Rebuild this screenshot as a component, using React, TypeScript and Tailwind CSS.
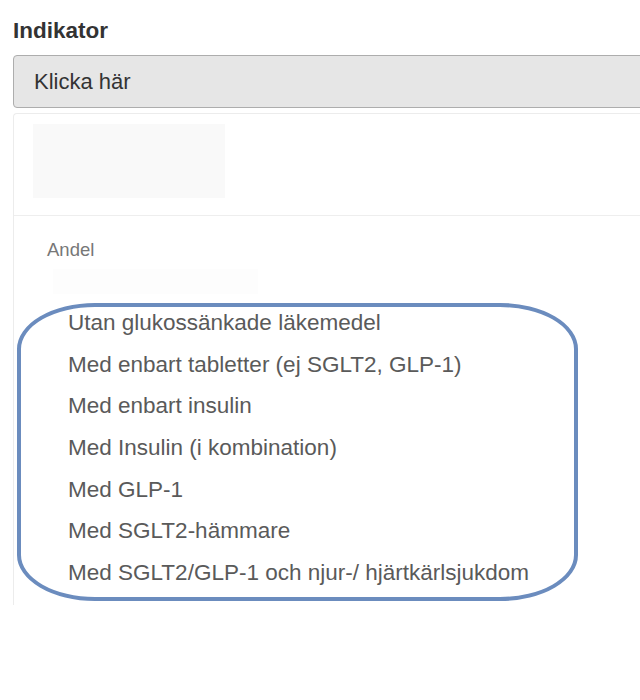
const items = [
  'Utan glukossänkade läkemedel',
  'Med enbart tabletter (ej SGLT2, GLP-1)',
  'Med enbart insulin',
  'Med Insulin (i kombination)',
  'Med GLP-1',
  'Med SGLT2-hämmare',
  'Med SGLT2/GLP-1 och njur-/ hjärtkärlsjukdom',
]

export default function App() {
  return (
    <div className="relative w-[640px] h-[700px] overflow-hidden bg-white font-['Liberation_Sans',Arial,sans-serif]">
      <div className="pl-[13px] pt-[16px]">
        {/* Label */}
        <div className="text-[22.5px] leading-[30px] font-bold text-[#333]">Indikator</div>

        {/* Select */}
        <div className="mt-[9px] w-[700px] h-[53px] border border-[#adadad] rounded-[4px] bg-[#e6e6e6] pl-[20px] text-[22px] leading-[51px] text-[#333]">
          Klicka här
        </div>

        {/* Dropdown panel */}
        <div className="mt-[5px] w-[700px] h-[492px] border-l border-t border-[#ececec] rounded-tl-[4px]">
          <div className="pl-[19px] pt-[10px] pb-[17px] border-b border-[#eeeeee]">
            <div className="w-[192px] h-[74px] bg-[#f9f9f9]" />
          </div>
          <div className="pl-[33px] pt-[22px] text-[18.5px] leading-[24px] text-[#777]">Andel</div>
          <div className="ml-[39px] mt-[7px] w-[205px] h-[25px] bg-[#fdfdfd]" />
          <ul className="mt-[8px] pl-[54px]">
            {items.map((t) => (
              <li key={t} className="text-[22.5px] leading-[41.67px] text-[#5a5a5a] whitespace-nowrap">
                {t}
              </li>
            ))}
          </ul>
        </div>
      </div>

      {/* Highlight ring drawn over the list */}
      <div className="absolute left-[17px] top-[303px] w-[561px] h-[298px] border-[4px] border-[#6b8cbe] rounded-[78px/46px]" />
    </div>
  )
}
